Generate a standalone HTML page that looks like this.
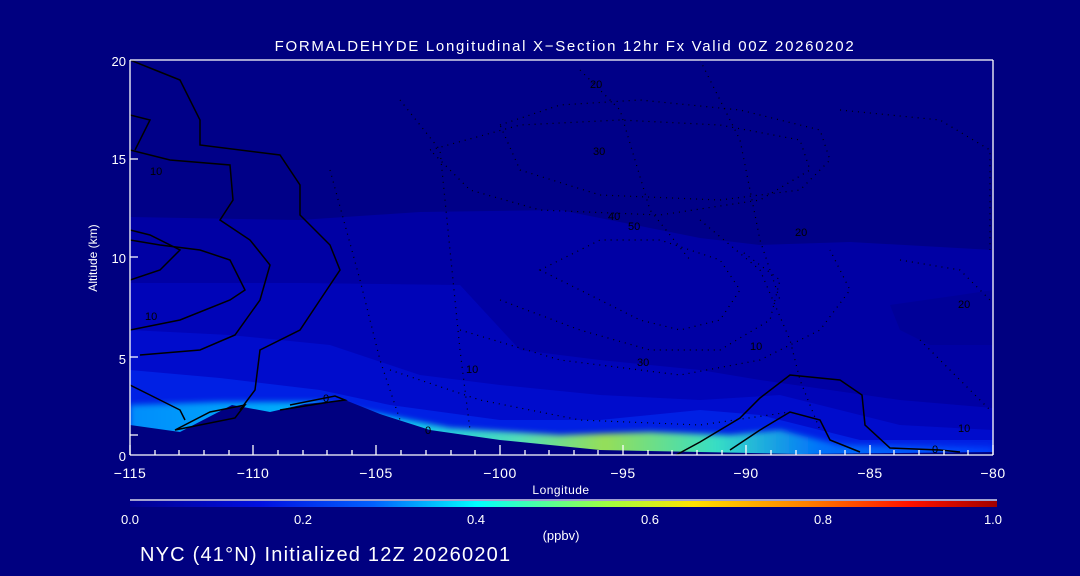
<!DOCTYPE html>
<html><head><meta charset="utf-8"><style>
html,body{margin:0;padding:0;background:#000080;}
svg{display:block}
text{font-family:"Liberation Sans",sans-serif;fill:#fff}
</style></head><body>
<svg width="1080" height="576" viewBox="0 0 1080 576" xmlns="http://www.w3.org/2000/svg">
<defs>
<linearGradient id="cb" x1="0" x2="1">
<stop offset="0" stop-color="#000090"/><stop offset="0.15" stop-color="#0010e0"/><stop offset="0.28" stop-color="#0060ff"/>
<stop offset="0.4" stop-color="#00ffff"/><stop offset="0.55" stop-color="#a0ff40"/><stop offset="0.65" stop-color="#ffe000"/>
<stop offset="0.78" stop-color="#ff8000"/><stop offset="0.9" stop-color="#ff1000"/><stop offset="1" stop-color="#a00000"/>
</linearGradient>
<linearGradient id="surf" x1="0" x2="1">
<stop offset="0" stop-color="#00a0ff"/><stop offset="0.3" stop-color="#00e0ff"/><stop offset="0.45" stop-color="#60ffb0"/><stop offset="0.55" stop-color="#b0ff40"/><stop offset="0.68" stop-color="#40ffc0"/><stop offset="0.8" stop-color="#0080ff"/><stop offset="1" stop-color="#0040ff"/>
</linearGradient>
<filter id="bl"><feGaussianBlur stdDeviation="3"/></filter>
<clipPath id="pc"><rect x="130" y="60" width="863" height="395"/></clipPath>
</defs>
<rect width="1080" height="576" fill="#000080"/>
<g clip-path="url(#pc)">
<rect x="130" y="60" width="863" height="395" fill="#000088"/>
<path d="M130 217 L300 220 L420 212 L560 210 L700 238 L760 245 L850 242 L993 250 L993 460 L130 460Z" fill="#0000a4"/>
<path d="M890 305 L960 295 L993 290 L993 345 L930 345 L900 330Z" fill="#000098"/>
<path d="M130 283 L300 283 L460 285 L520 350 L600 360 L700 370 L760 380 L830 390 L900 400 L993 408 L993 460 L130 460Z" fill="#0004b8"/>
<path d="M130 330 L230 335 L330 345 L420 375 L500 385 L600 395 L700 400 L780 395 L820 405 L900 425 L993 430 L993 460 L130 460Z" fill="#000ccc"/>
<path d="M130 370 L220 378 L320 390 L390 405 L500 420 L600 420 L700 410 L760 415 L860 440 L993 440 L993 460 L130 460Z" fill="#0020e4"/>
<g filter="url(#bl)">
<path d="M130 405 L220 402 L320 402 L380 414 L450 428 L560 435 L650 432 L730 435 L780 430 L840 445 L993 447 L993 460 L130 460Z" fill="url(#surf)" opacity="0.85"/>
</g>
<path d="M130 425 L180 432 L232 405 L270 412 L305 404 L345 400 L380 414 L430 430 L500 440 L600 450 L700 452 L800 454 L993 452 L993 460 L130 460Z" fill="#000080"/>
<g fill="none" stroke="#000" stroke-width="1.5">
<path d="M130 60 L155 70 L180 80 L200 120 L200 145 L280 155 L300 185 L300 215 L330 245 L340 270 L320 300 L300 330 L260 350 L255 390 L240 410"/>
<path d="M130 150 L170 160 L230 165 L233 200 L220 220 L250 240 L270 265 L260 300 L235 335 L200 350 L140 355"/>
<path d="M130 240 L160 245 L200 250 L230 260 L245 290 L230 300 L180 320 L130 330"/>
<path d="M130 115 L150 120 L135 150"/>
<path d="M130 280 L160 270 L180 250 L150 235 L130 230"/>
<path d="M130 385 L150 395 L180 410 L185 420"/>
<path d="M175 430 L210 412 L245 405 L235 418 L185 428Z"/>
<path d="M280 410 L330 402 L345 400 L335 396 L290 405"/>
<path d="M676 455 L700 442 L740 418 L760 398 L790 375 L840 380 L862 395 L865 425 L890 448 L940 450 L960 452"/>
<path d="M730 450 L760 430 L790 412 L820 420 L830 440 L860 452"/>
</g>
<g fill="none" stroke="#000" stroke-width="1.2" stroke-dasharray="1 5">
<path d="M500 125 L560 105 L640 100 L740 110 L820 130 L830 160 L800 190 L720 200 L600 195 L520 170Z"/>
<path d="M430 150 L520 125 L620 120 L720 125 L800 140 L810 170 L760 200 L660 215 L540 210 L470 190Z"/>
<path d="M540 270 L600 300 L640 320 L680 330 L720 320 L740 290 L720 260 L660 240 L600 240Z"/>
<path d="M500 300 L580 330 L650 350 L720 350 L770 320 L780 280 L740 250"/>
<path d="M460 330 L560 360 L680 375 L760 360 L820 330 L850 290 L830 250"/>
<path d="M390 370 L480 400 L580 420 L700 425 L790 412"/>
<path d="M700 220 L760 270 L790 340 L800 380 L820 430"/>
<path d="M330 170 L360 280 L380 360 L400 420"/>
<path d="M400 100 L440 150 L450 250 L460 350 L470 430"/>
<path d="M580 70 L620 110 L650 210 L690 260"/>
<path d="M840 110 L940 120 L990 150 L990 250"/>
<path d="M900 260 L960 270 L990 300"/>
<path d="M920 340 L960 380 L990 410"/>
<path d="M700 60 L740 140 L760 240 L780 300"/>
</g>
<g font-size="11">
<text x="150" y="175" style="fill:#000">10</text><text x="425" y="434" style="fill:#000">0</text>
<text x="323" y="402" style="fill:#000">0</text><text x="590" y="88" style="fill:#000">20</text>
<text x="593" y="155" style="fill:#000">30</text><text x="608" y="220" style="fill:#000">40</text>
<text x="628" y="230" style="fill:#000">50</text><text x="637" y="366" style="fill:#000">30</text>
<text x="466" y="373" style="fill:#000">10</text><text x="795" y="236" style="fill:#000">20</text>
<text x="958" y="308" style="fill:#000">20</text><text x="958" y="432" style="fill:#000">10</text>
<text x="750" y="350" style="fill:#000">10</text><text x="145" y="320" style="fill:#000">10</text>
<text x="932" y="453" style="fill:#000">0</text>
</g>
</g>
<g stroke="#fff" stroke-width="1.3" fill="none">
<line x1="130" y1="60" x2="993" y2="60"/>
<line x1="993" y1="60" x2="993" y2="455"/>
<line x1="130" y1="455" x2="993" y2="455"/>
<line x1="130" y1="60" x2="130" y2="455"/>
<path d="M130 455v-10M253 455v-10M376 455v-10M500 455v-10M623 455v-10M746 455v-10M870 455v-10M993 455v-10"/>
<path d="M155 455v-5M179 455v-5M204 455v-5M229 455v-5M278 455v-5M303 455v-5M327 455v-5M352 455v-5M401 455v-5M426 455v-5M451 455v-5M475 455v-5M525 455v-5M549 455v-5M574 455v-5M598 455v-5M648 455v-5M672 455v-5M697 455v-5M722 455v-5M771 455v-5M796 455v-5M820 455v-5M845 455v-5M894 455v-5M919 455v-5M944 455v-5M968 455v-5"/>
<path d="M130 435h8M130 159h8M130 357h8M130 257h8"/>
</g>
<text x="565" y="51" font-size="15" letter-spacing="1.7" text-anchor="middle">FORMALDEHYDE Longitudinal X−Section 12hr  Fx Valid 00Z 20260202</text>
<g font-size="13" text-anchor="end">
<text x="126" y="66">20</text><text x="126" y="164">15</text><text x="126" y="263">10</text><text x="126" y="364">5</text><text x="126" y="461">0</text>
</g>
<g font-size="14" text-anchor="middle" letter-spacing="0.5">
<text x="130" y="478">−115</text><text x="253" y="478">−110</text><text x="376" y="478">−105</text><text x="500" y="478">−100</text>
<text x="623" y="478">−95</text><text x="746" y="478">−90</text><text x="870" y="478">−85</text><text x="993" y="478">−80</text>
</g>
<text x="561" y="494" font-size="12" text-anchor="middle" letter-spacing="0.5">Longitude</text>
<text x="97" y="258" font-size="12" text-anchor="middle" transform="rotate(-90 97 258)">Altitude (km)</text>
<line x1="130" y1="500" x2="997" y2="500" stroke="#fff" stroke-width="1.3"/>
<rect x="130" y="501" width="867" height="6" fill="url(#cb)"/>
<g font-size="13" text-anchor="middle">
<text x="130" y="524">0.0</text><text x="303" y="524">0.2</text><text x="476" y="524">0.4</text>
<text x="650" y="524">0.6</text><text x="823" y="524">0.8</text><text x="993" y="524">1.0</text>
</g>
<text x="561" y="540" font-size="13" text-anchor="middle">(ppbv)</text>
<text x="140" y="561" font-size="20" letter-spacing="1.2">NYC (41°N) Initialized 12Z 20260201</text>
</svg>
</body></html>
